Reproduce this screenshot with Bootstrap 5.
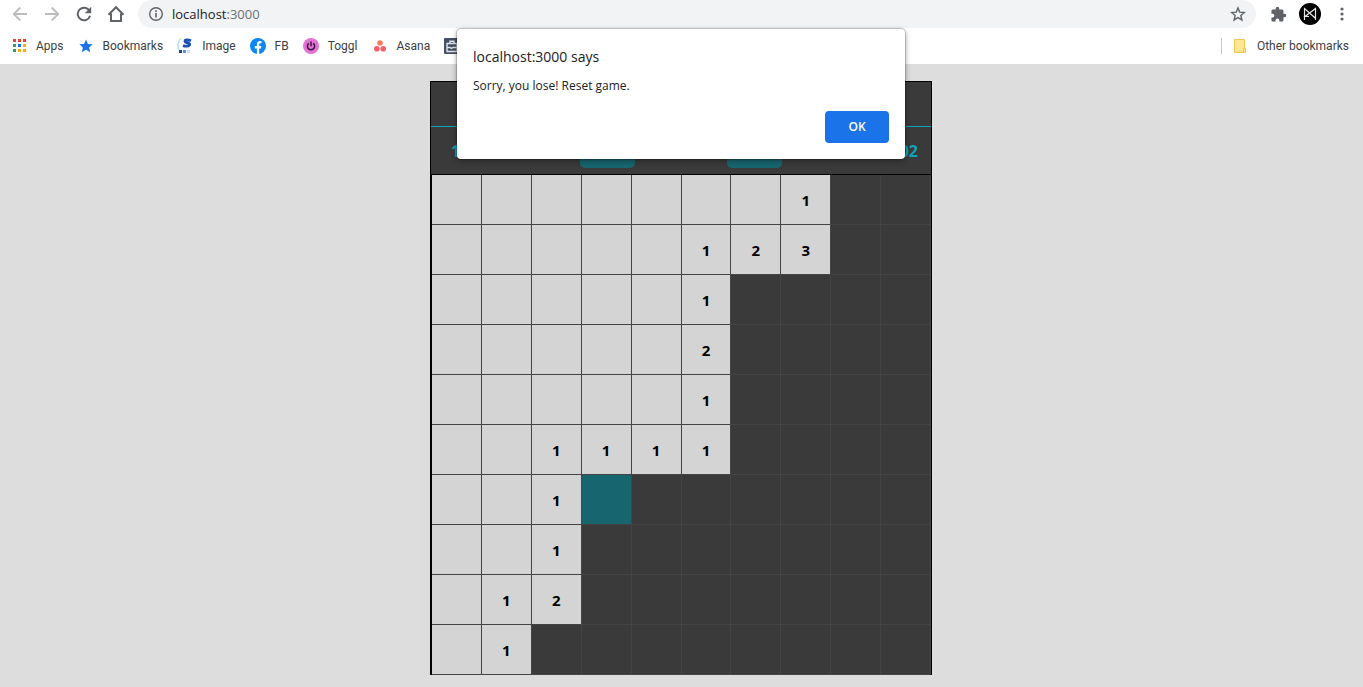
<!DOCTYPE html>
<html lang="en">
<head>
<meta charset="utf-8">
<meta name="viewport" content="width=device-width, initial-scale=1">
<title>Minesweeper</title>
<link href="https://cdn.jsdelivr.net/npm/bootstrap@5.3.0/dist/css/bootstrap.min.css" rel="stylesheet">
<style>
  body { font-family: "Open Sans", "Noto Sans", sans-serif; font-size: 12px; background: #ddd; color: #3c4043; }
  svg { display: block; flex: none; }
  .toolbar { height: 28px; padding: 0 5px 0 4px; }
  .tool-btn { width: 32px; height: 28px; border: 0; padding: 0; background: none; color: #5f6368; display: grid; place-items: center; }
  .tool-btn:disabled { color: #babcbe; }
  .omnibox { height: 28px; background: #f1f3f4; border-radius: 14px; margin: 0 6px; padding: 0 10px; color: #5f6368; }
  .address { font-size: 13px; line-height: 20px; color: #6b6f73; }
  .address b { font-weight: 400; color: #202124; }
  .bookmarks { height: 36px; padding: 0 14px 0 12px; gap: 14px; line-height: 16px; font-family: Roboto, "Open Sans", sans-serif; }
  .bookmarks a { display: flex; align-items: center; gap: 9px; color: #3c4043; text-decoration: none; white-space: nowrap; }
  .divider { width: 1px; height: 16px; background: #ccc; }
  .others { gap: 10px; }
  .page { padding: 17px 1px 12px 0; }
  .board { width: 502px; max-width: 100%; background: #3a3a3a; }
  .panel { border: 1px solid #000; height: 94px; }
  .title-row { height: 45px; border-bottom: 1px solid #0aa5b8; }
  .stats { height: 47px; padding: 0 13px 0 20px; color: #0fa3b8; font-size: 16px; line-height: 24px; font-weight: 700; }
  .count { min-width: 11px; }
  .choices { gap: 92px; }
  .pick { width: 55px; height: 35px; border: 0; border-radius: 5px; background: #17666f; }
  .field { display: grid; grid-template-columns: repeat(10, 1fr); grid-auto-rows: 50px; border-left: 2px solid #000; border-right: 1px solid #000; }
  .cell { border: 0; border-right: 1px solid #444; border-bottom: 1px solid #444; border-radius: 0; padding: 0; background: #3a3a3a; color: #000; font-size: 15px; line-height: 20px; font-weight: 700; }
  .cell.open { background: #d4d4d4; }
  .cell.hit { background: #17666f; }
  .alert-layer { position: absolute; inset: 29px 0 auto 0; padding-right: 1px; }
  .prompt { width: 448px; height: 130px; padding: 17px 16px 16px; background: #fff; border-radius: 4px; box-shadow: 0 0 1px 1px rgba(0,0,0,.2), 0 2px 6px rgba(0,0,0,.35); color: #202124; }
  .prompt h1 { font-size: 14px; line-height: 22px; font-weight: 400; margin: 0 0 9px; }
  .prompt p { font-size: 12px; line-height: 18px; margin: 0; }
  .ok-btn { width: 64px; height: 32px; border: 0; border-radius: 4px; background: #1a73e8; color: #fff; font-size: 12px; font-weight: 600; }
</style>
<script src="https://cdn.jsdelivr.net/npm/bootstrap@5.3.0/dist/js/bootstrap.bundle.min.js"></script>
</head>
<body>
<header class="bg-white">
  <div class="toolbar d-flex align-items-center">
    <button class="tool-btn" disabled aria-label="Back"><svg width="16" height="16" viewBox="0 0 16 16" fill="none" stroke="currentColor" stroke-width="1.8"><path d="M15 8H2M8.300 1.500 1.800 8l6.500 6.500"/></svg></button>
    <button class="tool-btn" disabled aria-label="Forward"><svg width="16" height="16" viewBox="0 0 16 16" fill="none" stroke="currentColor" stroke-width="1.8"><path d="M1 8h13M7.700 1.500 14.200 8l-6.500 6.500"/></svg></button>
    <button class="tool-btn" aria-label="Reload"><svg width="16" height="16" viewBox="0 0 16 16"><path d="M13.400 4.600A6.300 6.300 0 1 0 14.100 9.800" fill="none" stroke="currentColor" stroke-width="2"/><path d="M15.200.8v6.400H8.800z" fill="currentColor"/></svg></button>
    <button class="tool-btn" aria-label="Home"><svg width="18" height="18" viewBox="0 0 18 18" fill="none" stroke="currentColor" stroke-width="2"><path d="M1.500 9.700 9 2.200l7.500 7.500M4 8.500V16h10V8.500"/></svg></button>
    <div class="omnibox flex-grow-1 d-flex align-items-center">
      <svg width="16" height="16" viewBox="0 0 16 16"><circle cx="8" cy="8" r="6.300" fill="none" stroke="currentColor" stroke-width="1.400"/><path d="M7.200 7h1.600v4.500H7.200zM7.200 4.300h1.600v1.600H7.200z" fill="currentColor"/></svg>
      <span class="address ms-2"><b>localhost</b>:3000</span>
      <svg class="ms-auto" width="16" height="16" viewBox="0 0 16 16" fill="none" stroke="currentColor" stroke-width="1.400"><path d="m8 1.900 1.700 4.200 4.700.4-3.600 3 1.100 4.500L8 11.600 4.100 14l1.100-4.500-3.600-3 4.700-.4z"/></svg>
    </div>
    <button class="tool-btn" aria-label="Extensions"><svg width="17" height="17" viewBox="0 0 24 24" fill="currentColor"><path d="M20.500 11H19V7c0-1.100-.9-2-2-2h-4V3.500a2.500 2.500 0 0 0-5 0V5H4c-1.100 0-2 .9-2 2v3.800h1.500a2.700 2.700 0 0 1 0 5.400H2V20c0 1.100.9 2 2 2h3.800v-1.500a2.700 2.700 0 0 1 5.400 0V22H17c1.100 0 2-.9 2-2v-4h1.500a2.500 2.500 0 0 0 0-5z"/></svg></button>
    <button class="tool-btn" aria-label="Profile"><svg width="22" height="22" viewBox="0 0 22 22"><circle cx="11" cy="11" r="11"/><path d="M5.500 17V5.500l11 9.800V5.500L6 13.500h4M16.500 15v2" fill="none" stroke="#e8e8e8" stroke-width="1.200"/></svg></button>
    <button class="tool-btn" aria-label="Menu"><svg width="4" height="14" viewBox="0 0 4 14" fill="currentColor"><circle cx="2" cy="2" r="1.600"/><circle cx="2" cy="7" r="1.600"/><circle cx="2" cy="12" r="1.600"/></svg></button>
  </div>
  <nav class="bookmarks d-flex align-items-center" aria-label="Bookmarks">
    <a href="#"><svg width="15" height="16" viewBox="1 0 15 16"><path fill="#ea4335" d="M2 1h3v3H2zM7 1h3v3H7zM12 1h3v3h-3z"/><path fill="#34a05a" d="M2 6h3v3H2zM2 11h3v3H2z"/><path fill="#1a73e8" d="M7 6h3v3H7z"/><path fill="#fbab08" d="M12 6h3v3h-3zM7 11h3v3H7zM12 11h3v3h-3z"/></svg>Apps</a>
    <a href="#"><svg width="16" height="16" viewBox="0 0 16 16" fill="#1a73e8"><path d="m8 1.500 1.900 4.400 4.800.4-3.600 3.200 1.100 4.700L8 11.700l-4.200 2.500 1.100-4.700-3.600-3.200 4.800-.4z"/></svg>Bookmarks</a>
    <a href="#"><svg width="16" height="16" viewBox="0 0 16 16"><path d="M4 .5C.3 4 .3 9 2 12" fill="none" stroke="#b5dcf2" stroke-width="1.500"/><path d="M14 2.800C11 1.400 7.900 1.500 8 3.300s5 1.500 4.700 3.300S8.600 8.600 6 7.600" fill="none" stroke="#1d4fb8" stroke-width="2.800"/><path d="M2 12h3v3H2z" fill="#1744a8"/><path d="M6 12h3v3H6z" fill="#5c93d8"/><path d="M10 12h3v3h-3z" fill="#bedcf5"/></svg>Image</a>
    <a href="#"><svg width="16" height="16" viewBox="0 0 16 16"><circle cx="8" cy="8" r="8" fill="#0d86f5"/><path d="M6.900 15.900v-5.500H4.800V8h2.100V6.300c0-2.100 1.200-3.200 3-3.200l1.600.1v2h-1c-.9 0-1.300.5-1.300 1.200V8h2.200l-.4 2.400H9.200v5.500z" fill="#fff"/></svg>FB</a>
    <a href="#"><svg width="16" height="16" viewBox="0 0 16 16"><circle cx="8" cy="8" r="8" fill="#e272d4"/><path d="M8 3.500v4.700M5.700 5.400a3.600 3.600 0 1 0 4.600 0" fill="none" stroke="#3d1745" stroke-width="1.500"/></svg>Toggl</a>
    <a href="#"><svg width="16" height="16" viewBox="0 0 16 16"><circle cx="8" cy="5" r="2.800" fill="#fb7b58"/><circle cx="4.800" cy="10.700" r="2.800" fill="#f95c68"/><circle cx="11.200" cy="10.700" r="2.800" fill="#f95c68"/></svg>Asana</a>
    <a href="#" aria-label="Bookmark"><svg width="16" height="16" viewBox="0 0 16 16"><rect width="16" height="16" rx="1" fill="#464e63"/><path d="M3 5.500h10v8H3zM6 5V3.200h4V5M3 9.500h3l1.500 1 1.500-1h4" fill="none" stroke="#dfe3ea" stroke-width="1.400"/></svg></a>
    <div class="others ms-auto d-flex align-items-center">
      <span class="divider"></span>
      <a href="#"><svg width="16" height="16" viewBox="0 0 16 16"><path d="M2.500 1.500h10v9.300h1v3.700h-11z" fill="#ffe694" stroke="#edc84e"/><path d="M11.500 10.500h2v4h-2z" fill="#ffe694" stroke="#edc84e"/></svg>Other bookmarks</a>
    </div>
  </nav>
</header>

<div class="page">
  <main class="board mx-auto">
    <div class="panel">
      <div class="title-row"></div>
      <div class="stats d-flex align-items-center justify-content-between">
        <span class="count">1</span>
        <div class="choices d-flex">
          <button class="pick" aria-label="Reset"></button>
          <button class="pick" aria-label="New game"></button>
        </div>
        <span class="count">02</span>
      </div>
    </div>
    <div class="field" id="field"></div>
  </main>
</div>

<div class="alert-layer d-flex justify-content-center">
  <section class="prompt d-flex flex-column" role="alertdialog" aria-labelledby="says" aria-describedby="message">
    <h1 id="says">localhost:3000 says</h1>
    <p id="message">Sorry, you lose! Reset game.</p>
    <button class="ok-btn mt-auto ms-auto">OK</button>
  </section>
</div>

<script>
  // "." is an opened empty cell, "#" a covered one, "X" the mine that was hit
  const rows = [
    ".......1##",
    ".....123##",
    ".....1####",
    ".....2####",
    ".....1####",
    "..1111####",
    "..1X######",
    "..1#######",
    ".12#######",
    ".1########"
  ];
  const field = document.getElementById("field");
  for (const ch of rows.join("")) {
    const cell = document.createElement("button");
    cell.className = "cell" + (ch === "#" ? "" : ch === "X" ? " hit" : " open");
    cell.setAttribute("aria-label", ch === "#" ? "covered" : ch === "X" ? "mine" : ch === "." ? "empty" : ch);
    if (/\d/.test(ch)) cell.textContent = ch;
    field.append(cell);
  }
</script>
</body>
</html>
